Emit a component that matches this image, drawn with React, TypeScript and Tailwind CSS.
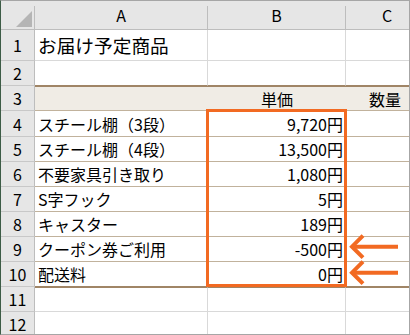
import React from "react";

type Item = { name: string; price: string };

const ITEMS: Item[] = [
  { name: "スチール棚（3段）", price: "9,720円" },
  { name: "スチール棚（4段）", price: "13,500円" },
  { name: "不要家具引き取り", price: "1,080円" },
  { name: "S字フック", price: "5円" },
  { name: "キャスター", price: "189円" },
  { name: "クーポン券ご利用", price: "-500円" },
  { name: "配送料", price: "0円" },
];

function RowHead({ n, h }: { n: number; h: string }) {
  return (
    <div
      className={`flex w-[34px] shrink-0 items-center justify-center border-r border-b border-r-[#bdbdbd] border-b-[#c8c8c8] bg-[#e6e6e6] ${h}`}
    >
      {n}
    </div>
  );
}

function PlainRow({ n, h, children }: { n: number; h: string; children?: React.ReactNode }) {
  return (
    <div className={`flex ${h}`}>
      <RowHead n={n} h={h} />
      <div className="flex w-[173px] shrink-0 items-center border-r border-b border-[#d9d9d9] pl-[3px]">
        {children}
      </div>
      <div className="w-[138px] shrink-0 border-r border-b border-[#d9d9d9]" />
      <div className="w-[78px] shrink-0 border-r border-b border-[#d9d9d9]" />
    </div>
  );
}

function Arrow({ y }: { y: number }) {
  return (
    <>
      <polyline
        points={`362,${y - 11} 351,${y} 362,${y + 11}`}
        fill="none"
        stroke="#f26a22"
        strokeWidth="4"
      />
      <line x1="352" y1={y} x2="397" y2={y} stroke="#f26a22" strokeWidth="4" />
    </>
  );
}

export default function App() {
  return (
    <div className="relative h-[335px] w-[410px] overflow-hidden border border-[#a6a6a6] border-l-[#3d5c46] bg-white font-['Noto_Sans_CJK_JP',sans-serif] text-[16px] leading-none text-black">
      {/* column headers */}
      <div className="flex h-[29px] border-b border-[#bdbdbd] bg-[#e6e6e6]">
        <div className="flex w-[33px] shrink-0 items-end justify-end pr-[2px] pb-[2px]">
          <div className="h-[16px] w-[16px] bg-[#b5b5b5] [clip-path:polygon(100%_0,100%_100%,0_100%)]" />
        </div>
        <div className="h-[23px] w-px shrink-0 self-end bg-[#bdbdbd]" />
        <div className="flex w-[172px] shrink-0 items-center justify-center">A</div>
        <div className="h-[23px] w-px shrink-0 self-end bg-[#bdbdbd]" />
        <div className="flex w-[137px] shrink-0 items-center justify-center">B</div>
        <div className="h-[23px] w-px shrink-0 self-end bg-[#bdbdbd]" />
        <div className="flex w-[78px] shrink-0 items-center justify-center pl-[4px]">C</div>
      </div>

      <PlainRow n={1} h="h-[31px]">
        <span className="text-[18.7px]">お届け予定商品</span>
      </PlainRow>

      {/* row 2 closes with the heavy rule above the table */}
      <div className="flex h-[25px]">
        <RowHead n={2} h="h-[25px]" />
        <div className="w-[173px] shrink-0 border-r border-b border-r-[#d9d9d9] border-b-[#a08566]" />
        <div className="w-[138px] shrink-0 border-r border-b border-r-[#d9d9d9] border-b-[#a08566]" />
        <div className="w-[78px] shrink-0 border-r border-b border-r-[#d9d9d9] border-b-[#a08566]" />
      </div>

      {/* table heading */}
      <div className="flex h-[25px]">
        <RowHead n={3} h="h-[25px]" />
        <div className="flex flex-1 border-t border-b border-t-[#a08566] border-b-[#c1b29c] bg-[#f0ece5]">
          <div className="w-[173px] shrink-0" />
          <div className="flex w-[138px] shrink-0 items-center justify-center">単価</div>
          <div className="flex w-[78px] shrink-0 items-center justify-center">数量</div>
        </div>
      </div>

      {ITEMS.map((item, i) => {
        const last = i === ITEMS.length - 1;
        const h = i === 0 ? "h-[26px]" : "h-[25px]";
        return (
          <div key={item.name} className={`flex ${h}`}>
            <RowHead n={i + 4} h={h} />
            <div
              className={`flex flex-1 border-b ${last ? "border-[#a08566]" : "border-[#c1b29c]"}`}
            >
              <div className="flex w-[173px] shrink-0 items-center pl-[3px]">{item.name}</div>
              <div className="flex w-[138px] shrink-0 items-center justify-end pr-[3px]">
                {item.price}
              </div>
              <div className="w-[78px] shrink-0" />
            </div>
          </div>
        );
      })}

      <div className="flex h-[25px]">
        <RowHead n={11} h="h-[25px]" />
        <div className="w-[173px] shrink-0 border-t border-r border-b border-t-[#a08566] border-r-[#d9d9d9] border-b-[#d9d9d9]" />
        <div className="w-[138px] shrink-0 border-t border-r border-b border-t-[#a08566] border-r-[#d9d9d9] border-b-[#d9d9d9]" />
        <div className="w-[78px] shrink-0 border-t border-r border-b border-t-[#a08566] border-r-[#d9d9d9] border-b-[#d9d9d9]" />
      </div>

      <PlainRow n={12} h="h-[25px]" />

      {/* highlight around the price column */}
      <div className="pointer-events-none absolute top-[108px] left-[205px] h-[178px] w-[141px] border-[3px] border-[#f26a22]" />

      <svg
        className="pointer-events-none absolute top-0 left-0"
        width="408"
        height="333"
        viewBox="0 0 408 333"
      >
        <Arrow y={245.7} />
        <Arrow y={271.7} />
      </svg>
    </div>
  );
}
